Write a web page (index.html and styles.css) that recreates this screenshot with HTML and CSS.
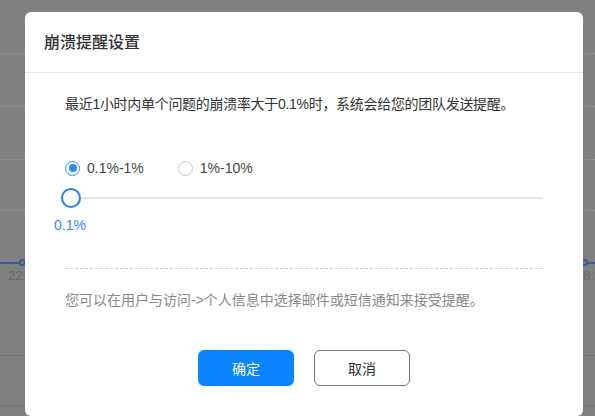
FILE: index.html
```html
<!DOCTYPE html>
<html lang="zh-CN">
<head>
<meta charset="utf-8">
<title>崩溃提醒设置</title>
<link rel="stylesheet" href="styles.css">
</head>
<body>
<div class="page">
  <div class="chart">
    <div class="grid-line g1"></div>
    <div class="grid-line g2"></div>
    <div class="grid-line g3"></div>
    <div class="grid-line g4"></div>
    <div class="series left"></div>
    <div class="marker ml"></div>
    <div class="series right"></div>
    <div class="marker mr"></div>
    <div class="axis-label al">22:</div>
    <div class="axis-label ar">08:</div>
    <div class="solid-line s1"></div>
    <div class="solid-line s2"></div>
  </div>
  <div class="overlay">
    <div class="dialog">
      <div class="dlg-header">
        <h2 class="dlg-title">崩溃提醒设置</h2>
      </div>
      <div class="dlg-body">
        <p class="desc">最近1小时内单个问题的崩溃率大于0.1%时，系统会给您的团队发送提醒。</p>
        <div class="radios">
          <label class="radio checked"><span class="radio-dot"></span><span>0.1%-1%</span></label>
          <label class="radio"><span class="radio-dot"></span><span>1%-10%</span></label>
        </div>
        <div class="slider">
          <div class="slider-handle"></div>
          <div class="slider-track"></div>
        </div>
        <div class="slider-value">0.1%</div>
        <div class="dashed"></div>
        <p class="note">您可以在用户与访问-&gt;个人信息中选择邮件或短信通知来接受提醒。</p>
        <div class="actions">
          <button class="btn primary">确定</button>
          <button class="btn">取消</button>
        </div>
      </div>
    </div>
  </div>
</div>
</body>
</html>
```
FILE: styles.css
```css
* { box-sizing: border-box; }
html, body { margin: 0; padding: 0; }
body {
  width: 595px;
  height: 416px;
  overflow: hidden;
  background: #808080;
  font-family: "Liberation Sans", "Noto Sans CJK SC", sans-serif;
}
.page { position: relative; width: 595px; height: 416px; }

.chart { position: absolute; inset: 0; }
.grid-line { position: absolute; left: 0; right: 0; height: 0; border-top: 1px dotted #959595; }
.g1 { top: 53px; } .g2 { top: 106px; } .g3 { top: 159px; } .g4 { top: 210px; }
.series { position: absolute; top: 262px; height: 2px; background: #3e5a9c; }
.series.left { left: 0; width: 22px; }
.series.right { left: 583px; width: 12px; }
.marker { position: absolute; top: 259px; width: 7px; height: 7px; border-radius: 50%; border: 2px solid #3e5a9c; background: #7f7f7f; }
.ml { left: 19px; } .mr { left: 581px; }
.axis-label { position: absolute; top: 268px; font-size: 13px; color: #666; }
.al { left: 8px; } .ar { left: 576px; }
.solid-line { position: absolute; left: 0; right: 0; height: 1px; background: #747474; }
.s1 { top: 355px; } .s2 { top: 405px; }

.overlay {
  position: absolute;
  inset: 0;
  padding: 12px 12px 0 25px;
}
.dialog {
  width: 558px;
  height: 404px;
  background: #fff;
  border-radius: 6px;
  overflow: hidden;
}
.dlg-header {
  height: 61px;
  padding: 2px 0 0 19px;
  border-bottom: 1px solid #e8e8e8;
  display: flex;
  align-items: center;
}
.dlg-title {
  margin: 0;
  font-size: 16px;
  font-weight: 500;
  color: #333;
  line-height: 20px;
}
.dlg-body { padding: 0 40px; }
.desc {
  margin: 21px 0 0;
  font-size: 14px;
  letter-spacing: -0.3px;
  line-height: 20px;
  color: #333;
}
.radios {
  margin-top: 44px;
  display: flex;
  align-items: center;
  gap: 34px;
  height: 20px;
}
.radio {
  display: flex;
  align-items: center;
  gap: 7px;
  font-size: 14px;
  color: #444;
}
.radio-dot {
  width: 15px;
  height: 15px;
  border-radius: 50%;
  border: 1px solid #c8c8c8;
  display: flex;
  align-items: center;
  justify-content: center;
}
.radio.checked .radio-dot { border-color: #2d8cf0; }
.radio.checked .radio-dot::after {
  content: "";
  width: 8px;
  height: 8px;
  border-radius: 50%;
  background: #2d8cf0;
}
.slider {
  margin-top: 10px;
  height: 20px;
  display: flex;
  align-items: center;
  margin-left: -4px;
}
.slider-handle {
  width: 20px;
  height: 20px;
  border-radius: 50%;
  border: 2.5px solid #1a86f5;
  background: #fff;
  flex: none;
}
.slider-track {
  flex: 1;
  height: 2px;
  background: #e4e4e4;
}
.slider-value {
  margin-top: 7px;
  margin-left: -11px;
  font-size: 14px;
  line-height: 20px;
  color: #2d8cf0;
}
.dashed {
  margin-top: 33px;
  border-top: 1px dashed #d0d0d0;
}
.note {
  margin: 21px 0 0;
  font-size: 14px;
  line-height: 20px;
  color: #888;
}
.actions {
  margin-top: 40px;
  display: flex;
  justify-content: center;
  gap: 20px;
}
.btn {
  width: 96px;
  height: 36px;
  border-radius: 6px;
  border: 1px solid #777;
  background: #fff;
  color: #333;
  font-family: inherit;
  font-size: 14px;
  padding: 0;
}
.btn.primary {
  background: #0a84ff;
  border-color: #0a84ff;
  color: #fff;
}
```
